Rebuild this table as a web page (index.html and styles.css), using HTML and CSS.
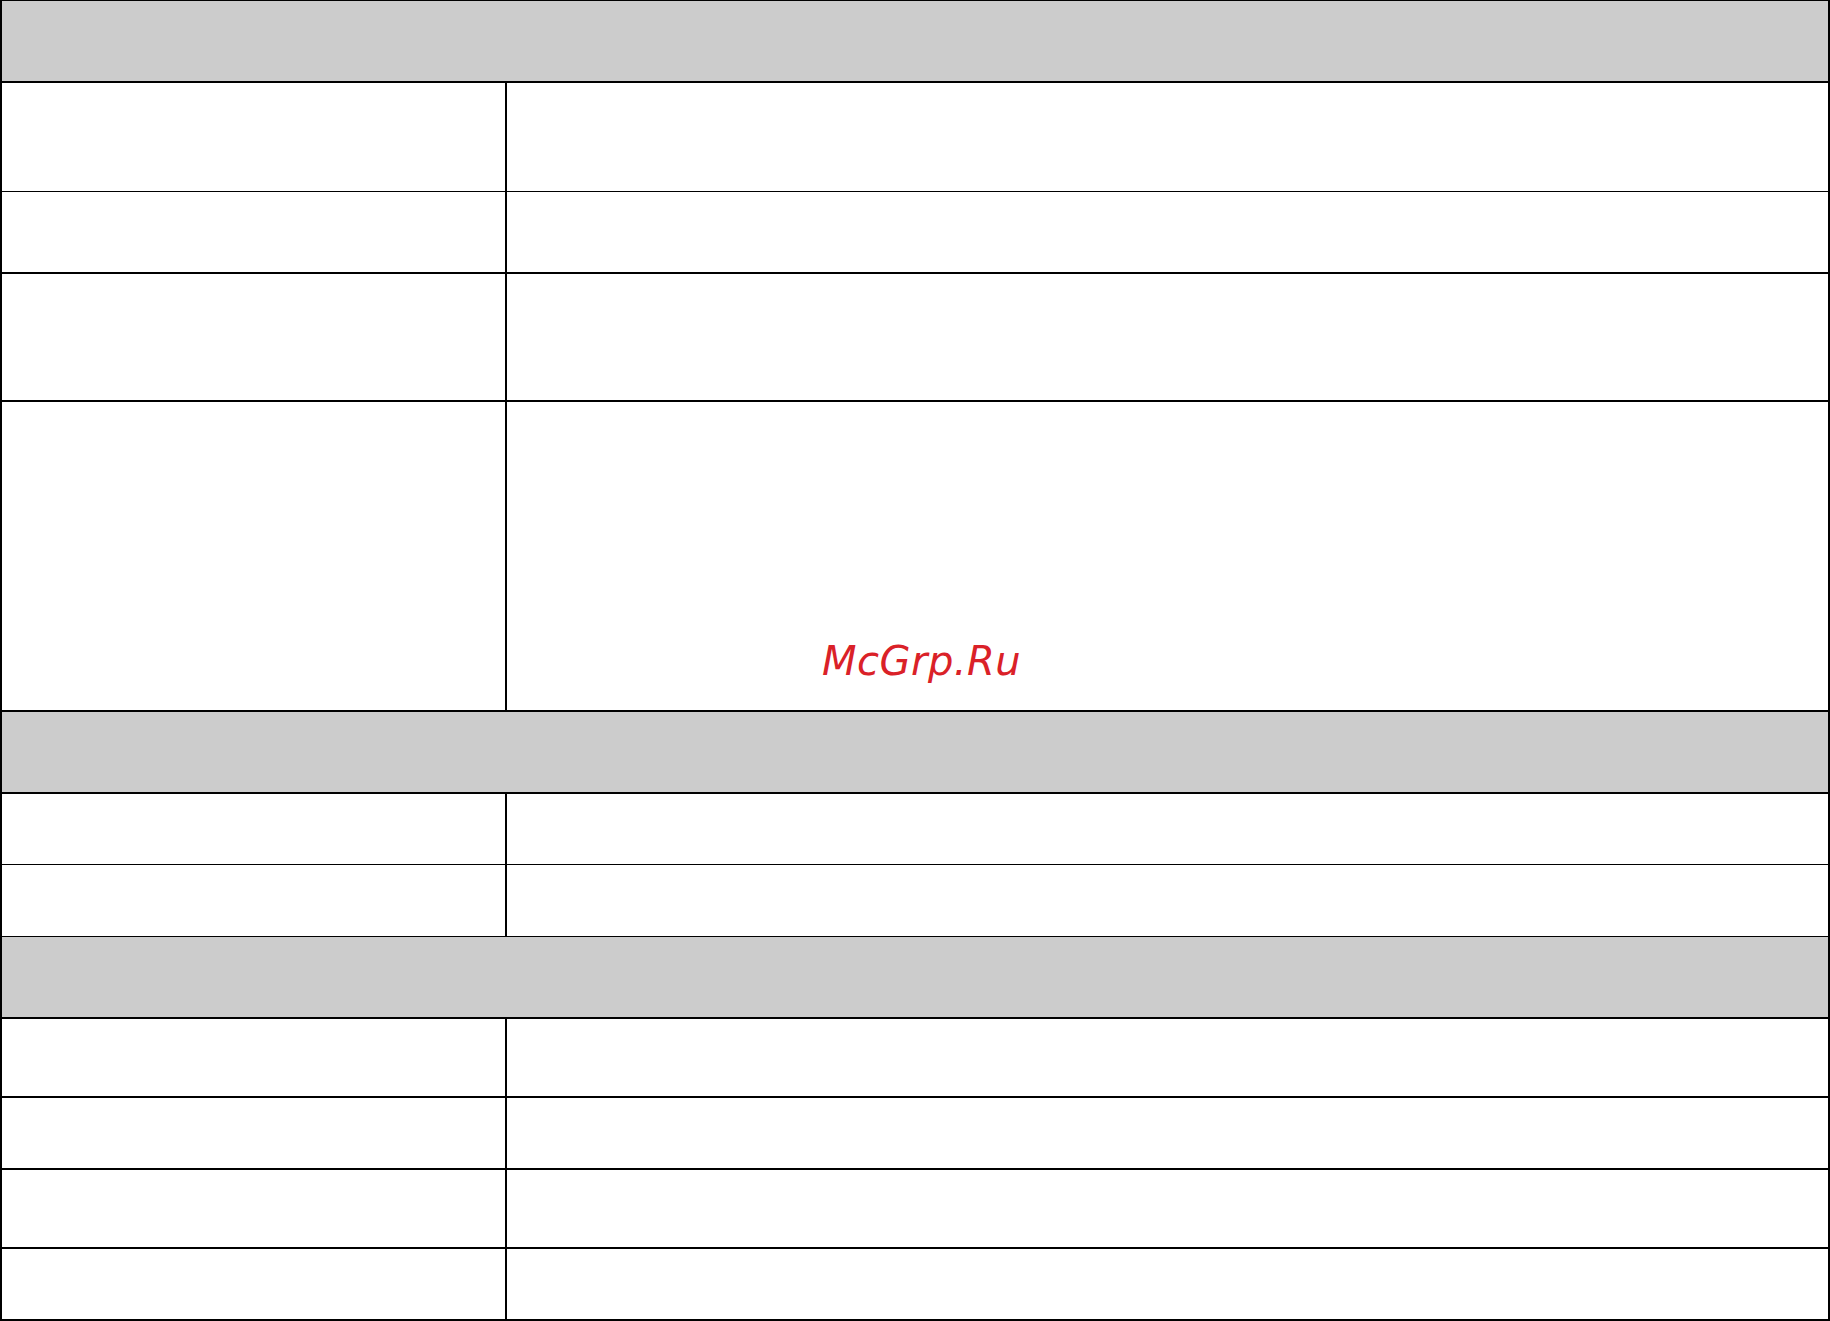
FILE: index.html
```html
<!DOCTYPE html>
<html>
<head>
<meta charset="utf-8">
<link rel="stylesheet" href="styles.css">
</head>
<body>
<div class="sheet">
  <div class="head h80 b2"></div>
  <div class="row h108 b1"><div class="c1"></div><div class="c2"></div></div>
  <div class="row h80 b2"><div class="c1"></div><div class="c2"></div></div>
  <div class="row h126 b2"><div class="c1"></div><div class="c2"></div></div>
  <div class="row h308 b2"><div class="c1"></div><div class="c2"></div></div>
  <div class="head h80 b2"></div>
  <div class="row h70 b1"><div class="c1"></div><div class="c2"></div></div>
  <div class="row h71 b1"><div class="c1"></div><div class="c2"></div></div>
  <div class="head h80 b2"></div>
  <div class="row h77 b2"><div class="c1"></div><div class="c2"></div></div>
  <div class="row h70 b2"><div class="c1"></div><div class="c2"></div></div>
  <div class="row h77 b2"><div class="c1"></div><div class="c2"></div></div>
  <div class="row h70 b2"><div class="c1"></div><div class="c2"></div></div>
  <div class="mark">McGrp.Ru</div>
</div>
</body>
</html>
```
FILE: styles.css
```css
html, body {
  margin: 0;
  padding: 0;
  background: #ffffff;
}
.sheet {
  position: relative;
  width: 1826px;
  border-left: 2px solid #000;
  border-right: 2px solid #000;
  border-top: 1px solid #000;
  display: flex;
  flex-direction: column;
}
.head {
  background: #cccccc;
}
.row {
  display: grid;
  grid-template-columns: 503px 1fr;
}
.c2 {
  border-left: 2px solid #000;
}
.b1 { border-bottom: 1px solid #000; }
.b2 { border-bottom: 2px solid #000; }
.h70 { height: 70px; }
.h71 { height: 71px; }
.h77 { height: 77px; }
.h80 { height: 80px; }
.h108 { height: 108px; }
.h126 { height: 126px; }
.h308 { height: 308px; }
.mark {
  position: absolute;
  left: 820px;
  top: 640px;
  font-family: "DejaVu Sans", sans-serif;
  font-style: italic;
  font-size: 40px;
  line-height: 40px;
  color: #da2128;
  letter-spacing: 0.5px;
}
```
